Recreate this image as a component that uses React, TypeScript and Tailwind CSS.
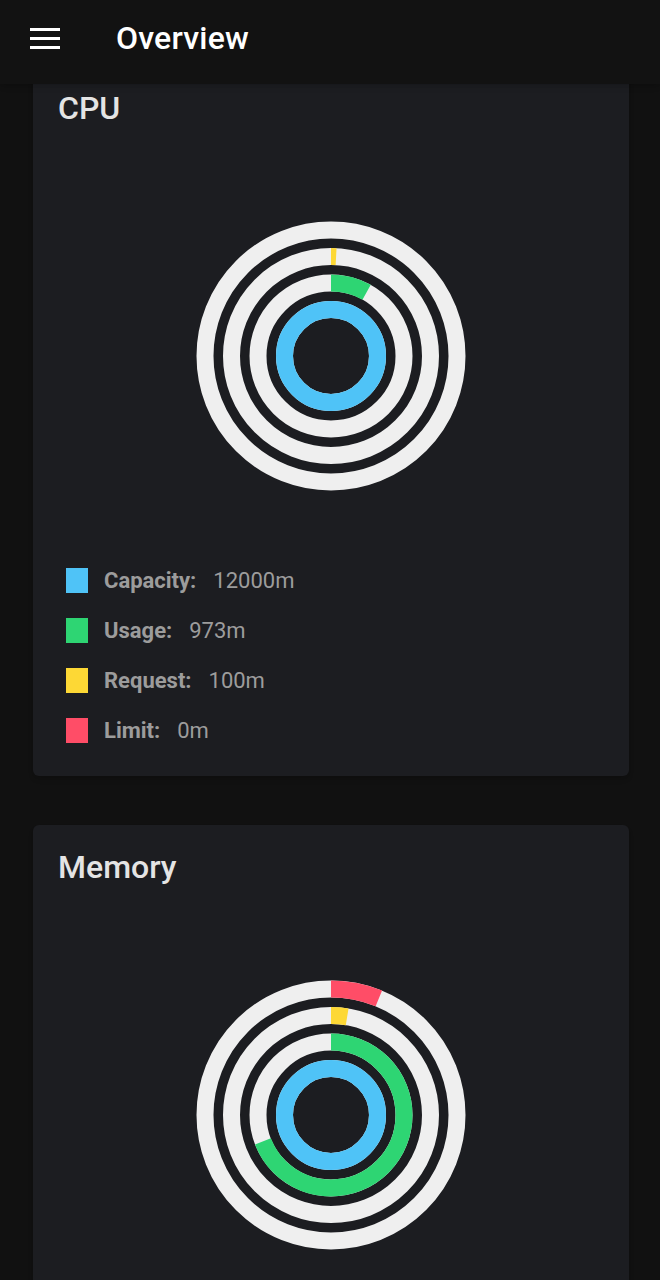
import React from "react";

type Ring = { color: string; value: number };

const RADII = [126, 99.5, 73, 46.5];

const RingChart = ({ rings }: { rings: Ring[] }) => {
  return (
    <svg width="270" height="270" viewBox="0 0 270 270">
      {rings.map((ring, i) => {
        const r = RADII[i];
        const c = 2 * Math.PI * r;
        const len = Math.max(0, Math.min(1, ring.value)) * c;
        return (
          <g key={i} transform="rotate(-90 135 135)">
            <circle cx="135" cy="135" r={r} fill="none" stroke="#efefef" strokeWidth="17" />
            {len > 0 && (
              <circle
                cx="135"
                cy="135"
                r={r}
                fill="none"
                stroke={ring.color}
                strokeWidth="17"
                strokeDasharray={`${len} ${c}`}
              />
            )}
          </g>
        );
      })}
    </svg>
  );
};

const legend = [
  { label: "Capacity:", color: "bg-[#4fc3f7]" },
  { label: "Usage:", color: "bg-[#2ed573]" },
  { label: "Request:", color: "bg-[#fdd835]" },
  { label: "Limit:", color: "bg-[#ff4d67]" },
];

const Card = ({
  title,
  rings,
  values,
  className,
}: {
  title: string;
  rings: Ring[];
  values: string[];
  className?: string;
}) => (
  <div className={`rounded-md bg-[#1c1d21] shadow-md ${className ?? ""}`}>
    <h2 className="pl-[25px] pt-[24px] text-[32px] leading-[36px] font-medium text-[#e4e4e4]">{title}</h2>
    <div className="mt-[95px] flex justify-center">
      <RingChart rings={rings} />
    </div>
    <div className="mt-[64px] pb-[21px] pl-[33px]">
      {legend.map((l, i) => (
        <div key={l.label} className="flex h-[50px] items-center">
          <span className={`h-[25px] w-[22px] ${l.color}`} />
          <span className="ml-[16px] text-[22px] font-bold text-[#9c9c9c]">{l.label}</span>
          <span className="ml-[17px] text-[22px] text-[#9c9c9c]">{values[i]}</span>
        </div>
      ))}
    </div>
  </div>
);

export default function App() {
  return (
    <div
      className="relative h-[1280px] overflow-hidden bg-[#111111]"
      style={{ fontFamily: "Roboto, 'Noto Sans', sans-serif" }}
    >
      <header className="absolute left-0 right-0 top-0 z-10 flex h-[84px] items-center bg-[#121212] pb-[8px] shadow-md">
        <div className="ml-[30px] flex w-[30px] flex-col gap-[6px]">
          <span className="h-[3px] bg-white" />
          <span className="h-[3px] bg-white" />
          <span className="h-[3px] bg-white" />
        </div>
        <h1 className="ml-[56px] text-[32px] font-medium tracking-[0.2px] text-white">Overview</h1>
      </header>
      <main className="pl-[33px] pr-[31px] pt-[66px]">
        <Card
          title="CPU"
          rings={[
            { color: "#ff4d67", value: 0 },
            { color: "#fdd835", value: 100 / 12000 },
            { color: "#2ed573", value: 973 / 12000 },
            { color: "#4fc3f7", value: 1 },
          ]}
          values={["12000m", "973m", "100m", "0m"]}
        />
        <Card
          className="mt-[49px]"
          title="Memory"
          rings={[
            { color: "#ff4d67", value: 0.062 },
            { color: "#fdd835", value: 0.026 },
            { color: "#2ed573", value: 0.69 },
            { color: "#4fc3f7", value: 1 },
          ]}
          values={["15.5Gi", "10.7Gi", "400Mi", "960Mi"]}
        />
      </main>
    </div>
  );
}
